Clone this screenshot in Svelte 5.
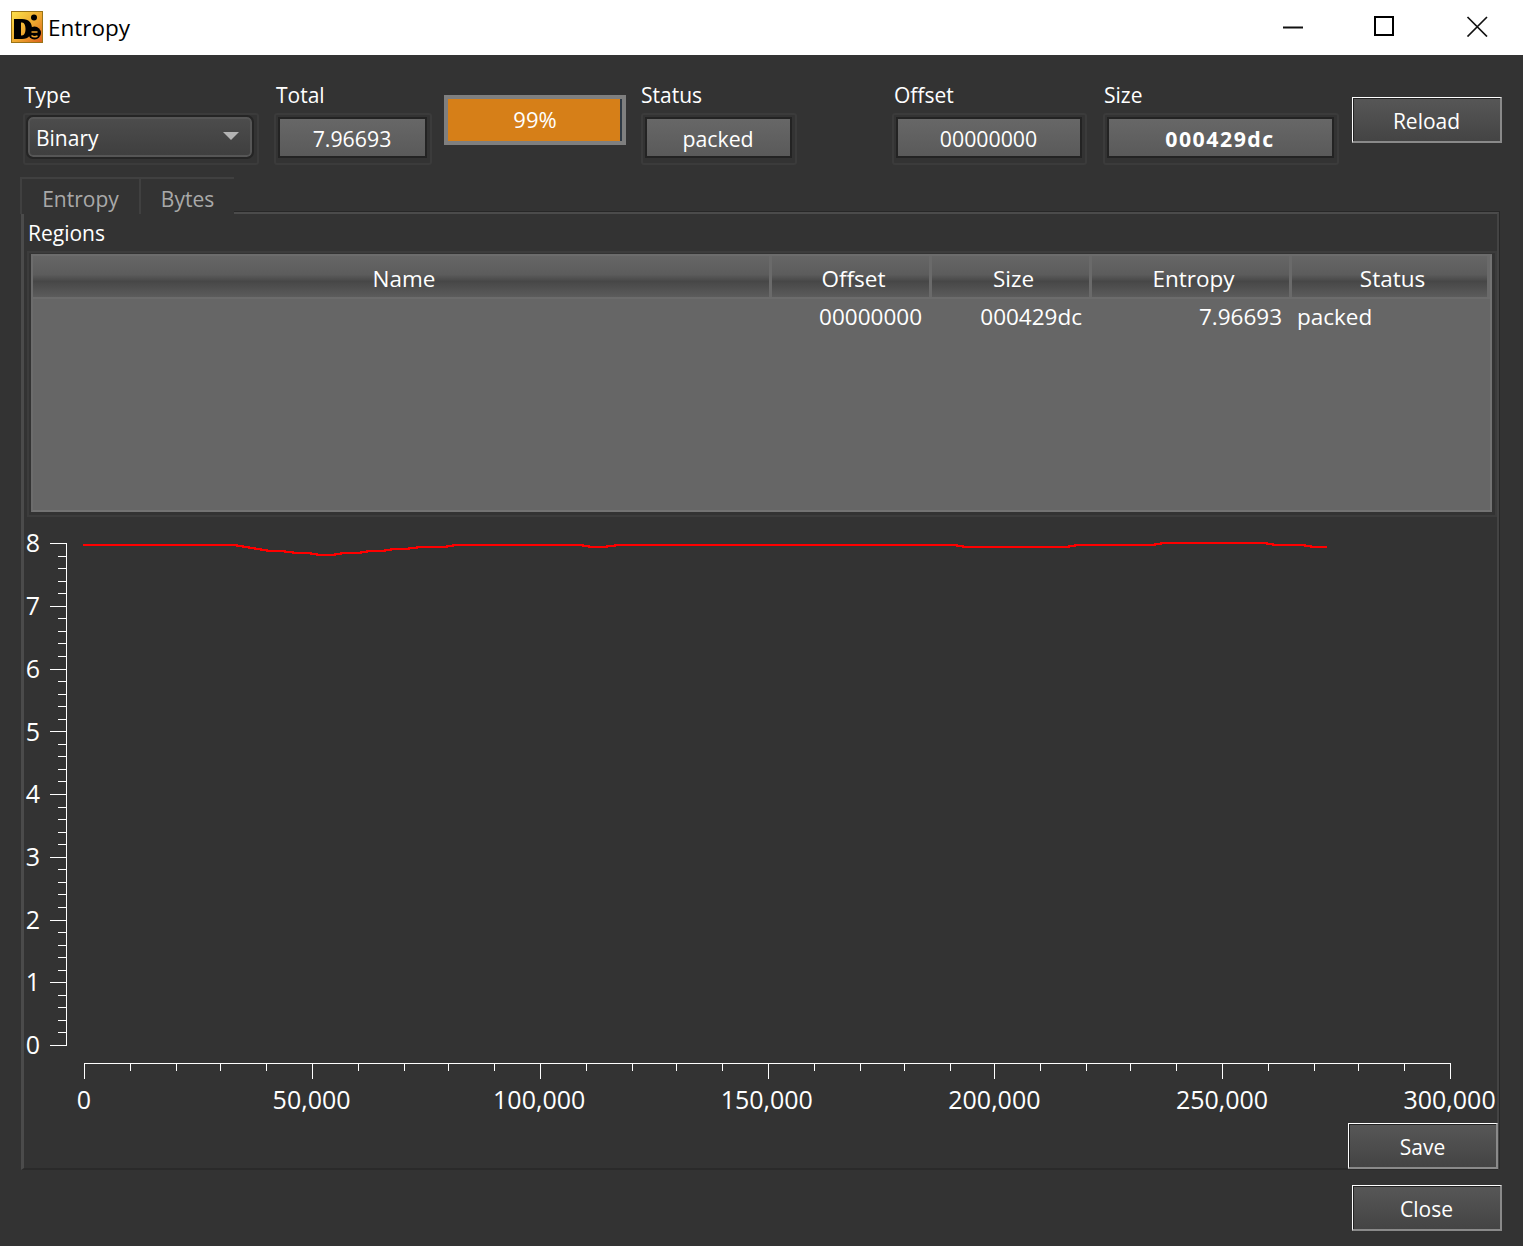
<script>
  const segs = [
    [83,237,545],[237,243,546],[243,249,547],[249,255,548],[255,261,549],[261,267,550],[267,285,551],[285,293,552],[293,311,553],[311,317,554],[317,335,555],[335,341,554],[341,361,553],[361,367,552],[367,385,551],[385,391,550],[391,409,549],[409,417,548],[417,447,547],[447,453,546],[453,583,545],[583,589,546],[589,607,547],[607,615,546],[615,957,545],[957,963,546],[963,1069,547],[1069,1075,546],[1075,1155,545],[1155,1161,544],[1161,1267,543],[1267,1273,544],[1273,1305,545],[1305,1311,546],[1311,1327,547]
  ];
  const linePath = segs.map(([a, b, y], i) => (i ? 'L' : 'M') + a + ' ' + y + 'H' + b).join('');
  const yLabels = [8, 7, 6, 5, 4, 3, 2, 1, 0];
  const yTicks = Array.from({ length: 41 }, (_, i) => ({ y: Math.round(543 + i * 12.55) + 0.5, major: i % 5 === 0 }));
  const majors = [84, 312, 540, 768, 994, 1222, 1450];
  const xTicks = majors.flatMap((m, i) => [
    { x: m + 0.5, major: true },
    ...(i < 6 ? [46, 92, 136, 182].map(d => ({ x: m + d + 0.5, major: false })) : [])
  ]);
  const xLabels = ['0', '50,000', '100,000', '150,000', '200,000', '250,000', '300,000'];
  const cols = ['Name', 'Offset', 'Size', 'Entropy', 'Status'];
</script>

<div class="window">
  <header class="titlebar">
    <svg class="logo" viewBox="0 0 32 32" width="32" height="32" aria-hidden="true">
      <defs>
        <linearGradient id="lg" x1="0" y1="0" x2="1" y2="1">
          <stop offset="0" stop-color="#fde24a" />
          <stop offset="0.55" stop-color="#eda62f" />
          <stop offset="1" stop-color="#dc5f1c" />
        </linearGradient>
      </defs>
      <rect x="0.5" y="0.5" width="31" height="31" fill="url(#lg)" stroke="#9a7416" />
      <path d="M3 8h8c7 0 10 4 10 9.500S18 28 11 28H3zM10 11.500v13h1c2.500 0 3.500-3 3.500-6.500S13.500 11.500 11 11.500z" fill="#000" fill-rule="evenodd" />
      <circle cx="23" cy="6.500" r="3" fill="#000" />
      <circle cx="23.500" cy="22" r="6.500" fill="#000" />
      <path d="M20.500 21h6M20.500 24.500c1.500 1.500 4 1.500 6 .5" stroke="#f0a42c" stroke-width="1.500" fill="none" />
    </svg>
    <span class="wintitle">Entropy</span>
    <div class="winbtns">
      <svg width="22" height="22" viewBox="0 0 22 22" aria-hidden="true"><path d="M1 12.500H21" stroke="#111" stroke-width="2" /></svg>
      <svg width="22" height="22" viewBox="0 0 22 22" aria-hidden="true"><rect x="1" y="2" width="18" height="18" fill="none" stroke="#000" stroke-width="2" /></svg>
      <svg width="22" height="22" viewBox="0 0 22 22" aria-hidden="true"><path d="M1.500 2L21 21.500M21 2L1.500 21.500" stroke="#111" stroke-width="1.700" /></svg>
    </div>
  </header>

  <main class="body">
    <section class="toprow">
      <div class="group g-type">
        <span class="lbl">Type</span>
        <div class="frame frame-combo">
          <div class="combo"><span>Binary</span><i class="arrow"></i></div>
        </div>
      </div>
      <div class="group g-total">
        <span class="lbl">Total</span>
        <div class="frame"><div class="field">7.96693</div></div>
      </div>
      <div class="progress"><span>99%</span></div>
      <div class="group g-status">
        <span class="lbl">Status</span>
        <div class="frame"><div class="field">packed</div></div>
      </div>
      <div class="group g-offset">
        <span class="lbl">Offset</span>
        <div class="frame"><div class="field">00000000</div></div>
      </div>
      <div class="group g-size">
        <span class="lbl">Size</span>
        <div class="frame"><div class="field bold">000429dc</div></div>
      </div>
      <button class="btn reload">Reload</button>
    </section>

    <nav class="tabs">
      <div class="tab t1">Entropy</div>
      <div class="tab t2">Bytes</div>
    </nav>

    <section class="pane">
      <div class="regions">Regions</div>
      <div class="tableframe">
        <div class="table">
          <div class="thead">
            {#each cols as c}<div class="th">{c}</div>{/each}
          </div>
          <div class="trow">
            <div></div>
            <div class="num">00000000</div>
            <div class="num">000429dc</div>
            <div class="num">7.96693</div>
            <div class="txt">packed</div>
          </div>
        </div>
      </div>

      <svg class="chart" width="1473" height="600" viewBox="24 517 1473 600" aria-label="Entropy chart">
        <g class="axis">
          <path d="M66.500 543V1045.500" />
          {#each yTicks as t}
            <path d={`M${t.major ? 50 : 58} ${t.y}H67`} />
          {/each}
          <path d="M84 1063.500H1451" />
          {#each xTicks as t}
            <path d={`M${t.x} 1063V${t.major ? 1079 : 1071}`} />
          {/each}
        </g>
        {#each yLabels as l, i}
          <text class="tl" x="33" y={552.4 + i * 62.7} text-anchor="middle">{l}</text>
        {/each}
        {#each xLabels as l, i}
          <text class="tl" x={84 + i * 227.6} y="1109" text-anchor="middle">{l}</text>
        {/each}
        <path class="line" d={linePath} />
      </svg>

      <div class="savebar"><button class="btn save">Save</button></div>
    </section>

    <div class="closebar"><button class="btn close">Close</button></div>
  </main>
</div>

<style>
  :global(body) {
    margin: 0;
    background: #333;
  }
  .window {
    width: 1523px;
    height: 1246px;
    display: flex;
    flex-direction: column;
    font-family: "Open Sans", "Noto Sans", sans-serif;
    font-size: 21px;
    color: #fff;
    overflow: hidden;
  }
  .titlebar {
    height: 55px;
    flex: none;
    background: #fff;
    display: flex;
    align-items: center;
    box-sizing: border-box;
    padding-left: 11px;
  }
  .logo {
    flex: none;
    margin-top: -2px;
  }
  .wintitle {
    margin-left: 5px;
    color: #000;
    font-size: 22.5px;
    margin-top: -1px;
  }
  .winbtns {
    margin-left: auto;
    display: flex;
    gap: 70px;
    padding-right: 35px;
    margin-top: -3px;
  }
  .body {
    flex: 1;
    background: #333;
    display: flex;
    flex-direction: column;
    position: relative;
  }
  .toprow {
    height: 122px;
    flex: none;
    display: flex;
    align-items: flex-start;
    box-sizing: border-box;
    padding: 26px 0 0 23px;
  }
  .group {
    display: flex;
    flex-direction: column;
    flex: none;
  }
  .lbl {
    display: block;
    height: 32px;
    line-height: 29px;
    padding-left: 1px;
  }
  .frame {
    box-sizing: border-box;
    height: 52px;
    border: 2px solid #3b3b3b;
    border-radius: 3px;
    padding: 2px 3px 6px 2px;
    display: flex;
  }
  .frame-combo {
    padding: 2px 5px 6px 3px;
  }
  .field {
    flex: 1;
    box-sizing: border-box;
    border: 2px solid #232323;
    height: 41px;
    background: linear-gradient(#676767, #5a5a5a);
    display: flex;
    align-items: center;
    justify-content: center;
    padding: 1px 1px 0 0;
    font-size: 21.3px;
  }
  .bold {
    font-weight: 700;
    letter-spacing: 1.5px;
  }
  .g-type { width: 236px; }
  .g-total { width: 158px; margin-left: 15px; }
  .g-total .lbl { padding-left: 2px; }
  .g-status { width: 156px; margin-left: 15px; }
  .g-status .lbl { padding-left: 0; }
  .g-offset { width: 195px; margin-left: 95px; }
  .g-offset .lbl { padding-left: 2px; }
  .g-size { width: 236px; margin-left: 16px; }
  .combo {
    flex: 1;
    height: 40px;
    box-sizing: border-box;
    border-radius: 5px;
    border: 2px solid #565656;
    outline: 2px solid #252525;
    background: linear-gradient(#4c4c4c, #3f3f3f);
    display: flex;
    align-items: center;
    padding: 2px 16px 0 6px;
    justify-content: space-between;
  }
  .arrow {
    width: 0;
    height: 0;
    border-left: 8px solid transparent;
    border-right: 8px solid transparent;
    border-top: 8px solid #b4b4b4;
    margin-top: -5px;
    margin-right: -5px;
  }
  .progress {
    flex: none;
    box-sizing: border-box;
    width: 182px;
    height: 50px;
    margin: 14px 0 0 12px;
    border: 4px solid #7f7f7f;
    background: linear-gradient(to right, #d67f18 0, #d67f18 172px, #2f3a46 172px);
    display: flex;
    align-items: center;
    justify-content: center;
    font-size: 22px;
  }
  .progress span { margin-top: -3px; }
  .btn {
    font: inherit;
    color: #fff;
    box-sizing: border-box;
    width: 150px;
    height: 46px;
    border-style: solid;
    border-width: 1px 2px 2px 1px;
    border-color: #fff #8a8a8a #8a8a8a #fff;
    box-shadow: inset 1px 1px 0 #222;
    background: linear-gradient(#575757, #444);
    padding: 2px 0 0;
  }
  .reload {
    flex: none;
    margin: 16px 0 0 13px;
  }
  .tabs {
    height: 37px;
    display: flex;
    flex: none;
    margin-left: 20px;
    margin-bottom: -2px;
    color: #a9a9a9;
    position: relative;
    z-index: 1;
    width: 214px;
  }
  .tab {
    box-sizing: border-box;
    height: 37px;
    background: #333;
    border-top: 2px solid #404040;
    border-left: 2px solid #404040;
    display: flex;
    align-items: center;
    justify-content: center;
    padding-top: 4px;
  }
  .t1 { width: 119px; }
  .t2 { width: 95px; }
  .pane {
    flex: none;
    box-sizing: border-box;
    margin-left: 21px;
    width: 1478px;
    height: 958px;
    border-top: 2px solid #4b4b4b;
    border-left: 3px solid #4b4b4b;
    border-right: 2px solid #444;
    border-bottom: 2px solid #2a2a2a;
    box-shadow: 1px -1px 0 #272727;
    position: relative;
  }
  .regions {
    height: 37px;
    line-height: 38px;
    padding-left: 4px;
    box-sizing: border-box;
  }
  .tableframe {
    box-sizing: border-box;
    margin-left: 3px;
    width: 1470px;
    height: 266px;
    border: 2px solid #3c3c3c;
    padding: 1px 3px 2px 2px;
  }
  .table {
    box-sizing: border-box;
    height: 258px;
    border: 2px solid #6c6c6c;
    border-right-color: #737373;
    border-bottom-color: #737373;
    background: #666;
  }
  .thead, .trow {
    display: grid;
    grid-template-columns: 739px 160px 160px 200px 1fr;
  }
  .thead {
    height: 43px;
    border-bottom: 2px solid #6c6c6c;
    box-sizing: border-box;
  }
  .th {
    box-sizing: border-box;
    border-right: 3px solid #6a6a6a;
    background: linear-gradient(#666, #5c5c5c 45%, #474747 62%, #5c5c5c);
    display: flex;
    align-items: center;
    justify-content: center;
    font-size: 22.5px;
    padding: 4px 0 0 6px;
  }
  .trow {
    height: 36px;
    line-height: 36px;
    font-size: 22.5px;
  }
  .num {
    text-align: right;
    padding-right: 10px;
  }
  .txt {
    padding-left: 5px;
  }
  .chart {
    display: block;
  }
  .axis path {
    stroke: #fff;
    stroke-width: 1;
    fill: none;
    shape-rendering: crispEdges;
  }
  .tl {
    fill: #fff;
    font-size: 25px;
    font-family: "Open Sans", sans-serif;
  }
  .line {
    stroke: #f00;
    stroke-width: 2;
    fill: none;
    shape-rendering: crispEdges;
  }
  .savebar {
    position: absolute;
    right: -1px;
    bottom: -1px;
  }
  .closebar {
    display: flex;
    justify-content: flex-end;
    padding: 15px 21px 0 0;
  }
</style>
